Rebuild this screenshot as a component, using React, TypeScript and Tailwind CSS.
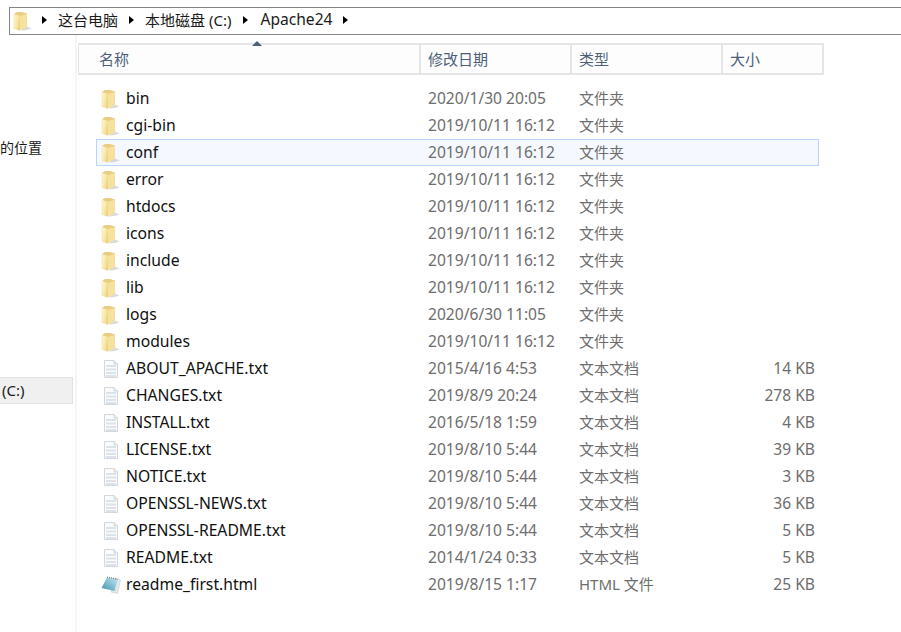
const font = { fontFamily: '"Noto Sans", "Noto Sans CJK SC", sans-serif' };

type Kind = "folder" | "txt" | "html";

const files: { name: string; date: string; type: string; size: string; kind: Kind }[] = [
  { name: "bin", date: "2020/1/30 20:05", type: "文件夹", size: "", kind: "folder" },
  { name: "cgi-bin", date: "2019/10/11 16:12", type: "文件夹", size: "", kind: "folder" },
  { name: "conf", date: "2019/10/11 16:12", type: "文件夹", size: "", kind: "folder" },
  { name: "error", date: "2019/10/11 16:12", type: "文件夹", size: "", kind: "folder" },
  { name: "htdocs", date: "2019/10/11 16:12", type: "文件夹", size: "", kind: "folder" },
  { name: "icons", date: "2019/10/11 16:12", type: "文件夹", size: "", kind: "folder" },
  { name: "include", date: "2019/10/11 16:12", type: "文件夹", size: "", kind: "folder" },
  { name: "lib", date: "2019/10/11 16:12", type: "文件夹", size: "", kind: "folder" },
  { name: "logs", date: "2020/6/30 11:05", type: "文件夹", size: "", kind: "folder" },
  { name: "modules", date: "2019/10/11 16:12", type: "文件夹", size: "", kind: "folder" },
  { name: "ABOUT_APACHE.txt", date: "2015/4/16 4:53", type: "文本文档", size: "14 KB", kind: "txt" },
  { name: "CHANGES.txt", date: "2019/8/9 20:24", type: "文本文档", size: "278 KB", kind: "txt" },
  { name: "INSTALL.txt", date: "2016/5/18 1:59", type: "文本文档", size: "4 KB", kind: "txt" },
  { name: "LICENSE.txt", date: "2019/8/10 5:44", type: "文本文档", size: "39 KB", kind: "txt" },
  { name: "NOTICE.txt", date: "2019/8/10 5:44", type: "文本文档", size: "3 KB", kind: "txt" },
  { name: "OPENSSL-NEWS.txt", date: "2019/8/10 5:44", type: "文本文档", size: "36 KB", kind: "txt" },
  { name: "OPENSSL-README.txt", date: "2019/8/10 5:44", type: "文本文档", size: "5 KB", kind: "txt" },
  { name: "README.txt", date: "2014/1/24 0:33", type: "文本文档", size: "5 KB", kind: "txt" },
  { name: "readme_first.html", date: "2019/8/15 1:17", type: "HTML 文件", size: "25 KB", kind: "html" },
];

function FolderIcon({ id }: { id: string }) {
  return (
    <svg width="20" height="20" viewBox="0 0 20 20">
      <defs>
        <linearGradient id={id} x1="0" y1="0" x2="1" y2="0.5">
          <stop offset="0" stopColor="#fef8d4" />
          <stop offset="0.6" stopColor="#f9e8a8" />
          <stop offset="1" stopColor="#edd283" />
        </linearGradient>
      </defs>
      <path d="M12 14.5 L18.5 17.5 L14 19 L8 19.5 Z" fill="#bdbdbd" opacity="0.55" />
      <path d="M1.5 2.5 L4 1 L9 1 L14 2.5 L14 15.5 L1.5 18 Z" fill="#e8cd82" />
      <path d="M1 3 L7 5 L7 19.5 L1 17.5 Z" fill={`url(#${id})`} />
      <path d="M7 5 L14 2.8 L14 15.5 L7 19.5 Z" fill="#f6e29c" />
      <path d="M1 3 V17.5 L7 19.5" fill="none" stroke="#efdc9f" strokeWidth="0.5" />
    </svg>
  );
}

function TxtIcon() {
  return (
    <svg width="20" height="20" viewBox="0 0 20 20">
      <path d="M3.5 1.5 H13 L16.5 5 V18.5 H3.5 Z" fill="#fafbfc" stroke="#d3d6da" strokeWidth="1" />
      <path d="M13 1.5 V5 H16.5" fill="#e8eaec" stroke="#d3d6da" strokeWidth="1" />
      <path d="M5 7 H15 M5 10.5 H15 M5 14 H15 M5 17 H15" stroke="#dbe2ea" strokeWidth="1.8" />
    </svg>
  );
}

function HtmlIcon() {
  return (
    <svg width="20" height="20" viewBox="0 0 20 20">
      <defs>
        <linearGradient id="notepad" x1="0" y1="1" x2="1" y2="0">
          <stop offset="0" stopColor="#3f93ad" />
          <stop offset="1" stopColor="#c2e8f1" />
        </linearGradient>
      </defs>
      <path d="M15 3 L19.5 5 L16.5 18.5 L10 17 Z" fill="#e4e7ea" stroke="#c0c5c9" strokeWidth="0.5" />
      <path d="M6 2.5 L16.5 5 L13.5 16 L0.5 13 Z" fill="url(#notepad)" />
      <path d="M6 2 L16.5 4.5" stroke="#5d6b73" strokeWidth="1.2" strokeDasharray="1 1" />
    </svg>
  );
}

function Chevron() {
  return <span className="h-0 w-0 border-y-[4px] border-l-[5px] border-y-transparent border-l-black" />;
}

function Row({ file, index }: { file: (typeof files)[number]; index: number }) {
  const selected = file.name === "conf";
  return (
    <div
      className={`flex h-[27px] w-[723px] items-center border ${
        selected ? "border-[#b8d6fb] bg-[#f5f9ff]" : "border-transparent"
      }`}
    >
      <span className="flex w-[29px] shrink-0 pl-[4px]">
        {file.kind === "folder" && <FolderIcon id={`folder-${index}`} />}
        {file.kind === "txt" && <TxtIcon />}
        {file.kind === "html" && <HtmlIcon />}
      </span>
      <span className="w-[302px] shrink-0 text-[15.7px] text-[#101010]">{file.name}</span>
      <span className="w-[151px] shrink-0 text-[15.6px] text-[#6d6d6d]">{file.date}</span>
      <span className="w-[120px] shrink-0 text-[15px] text-[#6d6d6d]">{file.type}</span>
      <span className="w-[116px] shrink-0 text-right text-[15.6px] text-[#6d6d6d]">{file.size}</span>
    </div>
  );
}

function HeaderCell({ label, width }: { label: string; width: string }) {
  return (
    <div className={`flex h-full shrink-0 items-center border-r-2 border-[#e5e5e5] pl-[7px] text-[15px] text-[#4c607a] ${width}`}>
      {label}
    </div>
  );
}

export default function App() {
  return (
    <div className="h-[632px] w-[901px] overflow-hidden bg-white" style={font}>
      <div className="pl-[9px] pt-[7px]">
        <div className="flex h-[28px] items-center border border-r-0 border-[#858585] pb-[2px] text-[15px] text-[#1a1a1a]">
          <span className="ml-[3px] mt-[2px]">
            <FolderIcon id="folder-address" />
          </span>
          <span className="ml-[9px] flex items-center gap-[11px]">
            <Chevron />
            <span>这台电脑</span>
            <Chevron />
            <span>本地磁盘 (C:)</span>
            <span className="ml-[1px] flex">
              <Chevron />
            </span>
            <span className="ml-[1px] text-[15.6px]">Apache24</span>
            <Chevron />
          </span>
        </div>
      </div>

      <div className="flex">
        <aside className="h-[597px] w-[77px] shrink-0 border-r-2 border-[#f5f5f5]">
          <div className="mt-[100px] h-[26px] text-[14px] leading-[26px] text-[#1a1a1a]">的位置</div>
          <div className="mr-[2px] mt-[216px] flex h-[27px] items-center border border-l-0 border-[#e2e2e2] bg-[#f0f0f0] pl-[2px] text-[15px] text-[#1a1a1a]">
            (C:)
          </div>
        </aside>

        <main className="min-w-0 flex-1">
          <div className="relative ml-[1px] mt-[8px] flex h-[32px] w-[746px] items-center border-y-2 border-l border-[#e5e5e5] bg-[#fdfdfd]">
            <span className="absolute left-[173px] top-[-4px] h-0 w-0 border-x-[5px] border-b-[5px] border-x-transparent border-b-[#4c607a]" />
            <HeaderCell label="名称" width="w-[342px] pl-[20px]" />
            <HeaderCell label="修改日期" width="w-[151px]" />
            <HeaderCell label="类型" width="w-[151px]" />
            <HeaderCell label="大小" width="w-[101px]" />
          </div>
          <div className="ml-[19px] mt-[10px]">
            {files.map((file, i) => (
              <Row key={file.name} file={file} index={i} />
            ))}
          </div>
        </main>
      </div>
    </div>
  );
}
